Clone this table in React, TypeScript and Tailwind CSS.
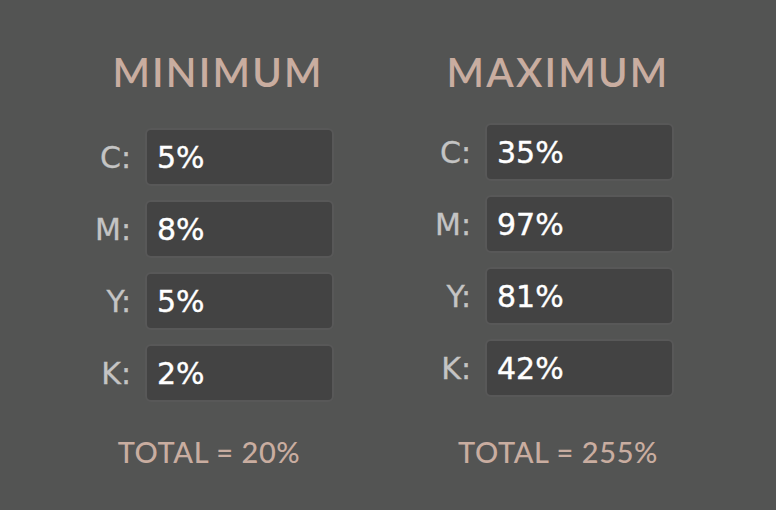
import React from "react";

interface Channel {
  label: string;
  value: string;
}

interface ColumnProps {
  title: string;
  channels: Channel[];
  total: string;
  rowsOffset: string;
  totalOffset: string;
}

const Column: React.FC<ColumnProps> = ({ title, channels, total, rowsOffset, totalOffset }) => {
  return (
    <div className="w-[236px] flex flex-col items-center">
      {/* Heading */}
      <h2 className="text-[40px] leading-[48px] tracking-[0.055em] text-[#c9ada0] font-['Lato',sans-serif] font-semibold">
        {title}
      </h2>

      {/* Channel rows */}
      <div className={`flex flex-col gap-[14px] w-full ${rowsOffset}`}>
        {channels.map((ch) => (
          <div key={ch.label} className="flex items-center justify-end gap-[14px] pr-[2px]">
            <span className="whitespace-nowrap text-[30px] text-[#c4c4c4] font-['DejaVu_Sans',sans-serif] [-webkit-text-stroke:0.3px_#c4c4c4]">
              {ch.label}:
            </span>
            <div className="shrink-0 w-[189px] h-[58px] rounded-[6px] border-2 border-[#585858] bg-[#434343] flex items-center px-[10px]">
              <span className="text-[30px] text-white font-['DejaVu_Sans',sans-serif] [-webkit-text-stroke:0.4px_white]">
                {ch.value}
              </span>
            </div>
          </div>
        ))}
      </div>

      {/* Total */}
      <div className={`text-[29px] tracking-[0.02em] text-[#c9ada0] font-['Lato',sans-serif] font-medium ${totalOffset}`}>
        {total}
      </div>
    </div>
  );
};

const App: React.FC = () => {
  const minimum: Channel[] = [
    { label: "C", value: "5%" },
    { label: "M", value: "8%" },
    { label: "Y", value: "5%" },
    { label: "K", value: "2%" },
  ];
  const maximum: Channel[] = [
    { label: "C", value: "35%" },
    { label: "M", value: "97%" },
    { label: "Y", value: "81%" },
    { label: "K", value: "42%" },
  ];

  return (
    <div className="w-[776px] h-[510px] bg-[#535453] flex justify-center gap-[104px] pt-[48px]">
      <Column
        title="MINIMUM"
        channels={minimum}
        total="TOTAL = 20%"
        rowsOffset="mt-[32px]"
        totalOffset="mt-[28px] -translate-x-[9px]"
      />
      <Column
        title="MAXIMUM"
        channels={maximum}
        total="TOTAL = 255%"
        rowsOffset="mt-[27px]"
        totalOffset="mt-[33px]"
      />
    </div>
  );
};

export default App;
